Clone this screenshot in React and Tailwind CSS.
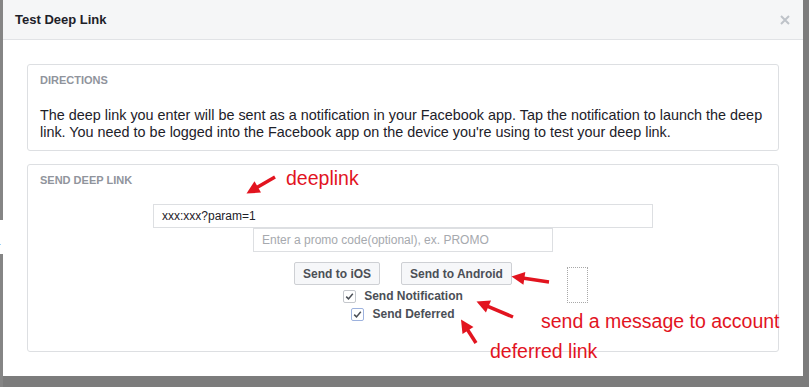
import React from 'react';

const RED = '#e2141f';

function Arrow({ from, to }) {
  const [x1, y1] = from;
  const [x2, y2] = to;
  const dx = x2 - x1;
  const dy = y2 - y1;
  const len = Math.hypot(dx, dy);
  const ux = dx / len;
  const uy = dy / len;
  const head = 13;
  const half = 6.5;
  const bx = x2 - ux * head;
  const by = y2 - uy * head;
  const pts = [
    [x2, y2],
    [bx - uy * half, by + ux * half],
    [bx + uy * half, by - ux * half],
  ]
    .map((p) => p.join(','))
    .join(' ');
  return (
    <g>
      <line x1={x1} y1={y1} x2={bx + ux * 2} y2={by + uy * 2} stroke={RED} strokeWidth="3.5" />
      <polygon points={pts} fill={RED} />
    </g>
  );
}

function Check({ focused }) {
  return (
    <span
      className={
        'flex h-[13px] w-[13px] items-center justify-center rounded-[2px] border bg-white ' +
        (focused ? 'border-[#9db2de]' : 'border-[#c4c7cc]')
      }
    >
      <svg width="9" height="9" viewBox="0 0 9 9">
        <polyline points="1.2,4.6 3.5,6.9 7.8,1.8" fill="none" stroke="#4b4f56" strokeWidth="1.5" />
      </svg>
    </span>
  );
}

export default function App() {
  return (
    <div className="relative flex h-[387px] w-[809px] overflow-hidden bg-[#7c7c7c] font-['Liberation_Sans',Arial,sans-serif]">
      {/* backdrop strip on the left */}
      <div className="flex w-[3px] flex-col">
        <div className="h-[220px] bg-[#858585]" />
        <div className="relative h-[34px] overflow-hidden bg-white text-[13px] leading-[17px] text-[#1d2129]">
          <div className="absolute left-[-4px] top-[1px]">t<br />r</div>
        </div>
        <div className="flex-1 bg-[#858585]" />
      </div>

      {/* modal */}
      <div className="flex h-[376px] w-[800px] flex-col bg-white">
        <div className="flex h-[40px] items-center justify-between border-b border-[#e1e3e6] bg-[#f5f6f7] pl-3 pr-[13px]">
          <span className="text-[13px] font-bold text-[#1d2129]">Test Deep Link</span>
          <svg width="10" height="10" viewBox="0 0 10 10">
            <path d="M1 1 L9 9 M9 1 L1 9" stroke="#bec3c9" strokeWidth="2" />
          </svg>
        </div>

        <div className="flex flex-col gap-[13px] px-6 pt-6">
          {/* directions */}
          <div className="h-[87px] rounded-[3px] border border-[#dddfe2] px-3 pt-2">
            <div className="text-[11px] font-bold uppercase leading-[14px] text-[#90949c]">Directions</div>
            <p className="mt-[20px] text-[14.4px] leading-[17px] text-[#1d2129]">
              The deep link you enter will be sent as a notification in your Facebook app. Tap the notification to launch the deep
              <br />
              link. You need to be logged into the Facebook app on the device you&apos;re using to test your deep link.
            </p>
          </div>

          {/* send deep link */}
          <div className="relative h-[188px] rounded-[3px] border border-[#dddfe2] px-3 pt-2">
            <div className="text-[11px] font-bold uppercase leading-[14px] text-[#90949c]">Send Deep Link</div>
            <div className="mt-[17px] flex flex-col items-center">
              <div className="flex h-6 w-[500px] items-center border border-[#dddfe2] px-2 text-[12px] text-[#1d2129]">
                xxx:xxx?param=1
              </div>
              <div className="flex h-6 w-[300px] items-center border border-[#dddfe2] px-2 text-[12px] text-[#a6a9ae]">
                Enter a promo code(optional), ex. PROMO
              </div>
              <div className="mt-[10px] flex gap-[21px]">
                <button className="h-[23px] rounded-[2px] border border-[#ced0d4] bg-[#f6f7f9] px-2 text-[12px] font-bold text-[#4b4f56]">
                  Send to iOS
                </button>
                <button className="h-[23px] rounded-[2px] border border-[#ced0d4] bg-[#f6f7f9] px-2 text-[12px] font-bold text-[#4b4f56]">
                  Send to Android
                </button>
              </div>
              <label className="mt-[2px] flex h-[18px] items-center gap-2 text-[12px] font-bold text-[#4b4f56]">
                <Check />
                Send Notification
              </label>
              <label className="flex h-[18px] items-center gap-2 text-[12px] font-bold text-[#4b4f56]">
                <Check focused />
                Send Deferred
              </label>
            </div>
            <div className="absolute left-[539px] top-[102px] h-[36px] w-[21px] border border-dotted border-[#a8a8a8]" />
          </div>
        </div>
      </div>

      {/* annotations */}
      <svg className="pointer-events-none absolute left-0 top-0" width="809" height="387">
        <Arrow from={[275, 177]} to={[246.5, 193.5]} />
        <Arrow from={[549, 282]} to={[511.5, 276.5]} />
        <Arrow from={[513, 317]} to={[476.5, 301.5]} />
        <Arrow from={[476, 343]} to={[461, 319.5]} />
      </svg>
      <span className="absolute left-[286px] top-[169px] text-[19.5px] leading-[19.5px] text-[#e2141f]">deeplink</span>
      <span className="absolute left-[541px] top-[312px] text-[19.5px] leading-[19.5px] text-[#e2141f]">send a message to account</span>
      <span className="absolute left-[490px] top-[342px] text-[19.5px] leading-[19.5px] text-[#e2141f]">deferred link</span>
    </div>
  );
}
